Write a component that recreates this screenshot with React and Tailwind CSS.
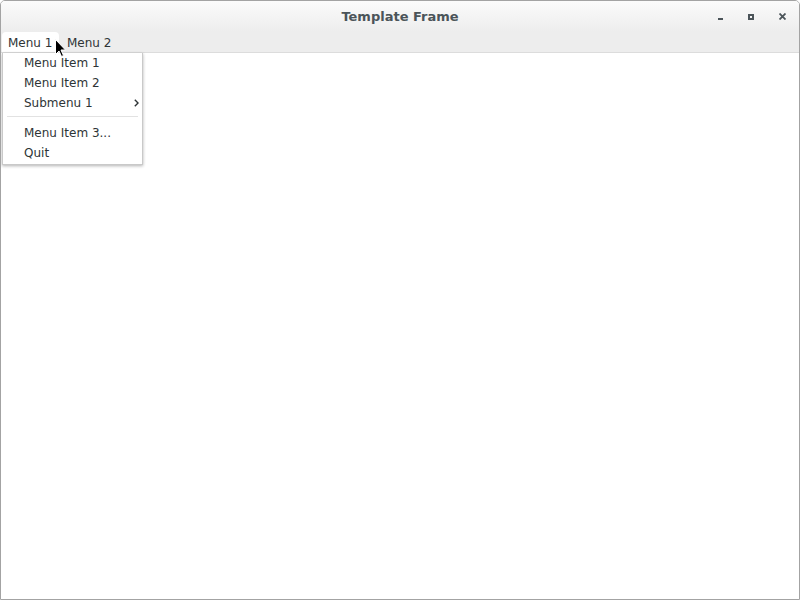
import React from 'react';

const font = { fontFamily: '"DejaVu Sans", "Liberation Sans", sans-serif' };

function Cursor() {
  return (
    <svg className="absolute left-[54px] top-[38px]" width="12" height="19" viewBox="0 0 12 19">
      <path d="M0.5 0.5 L0.5 15.5 L4 12 L6.5 17.5 L8.5 16.5 L6 11 L10.5 11 Z" fill="#000" stroke="#fff" strokeWidth="1" />
    </svg>
  );
}

export default function App() {
  return (
    <div className="w-[800px] h-[600px] bg-white" style={font}>
      <div className="relative w-full h-full flex flex-col border border-[#a3a3a3] rounded-t-[5px] overflow-hidden">
        {/* Title bar */}
        <div className="h-[31px] flex items-center justify-center relative bg-gradient-to-b from-[#fbfbfb] to-[#ededed]">
          <span className="text-[13px] font-bold text-[#4b5459] mt-[1px]">Template Frame</span>
          <div className="absolute right-[13px] top-[12px] flex items-center gap-[25px]">
            <span className="w-[5px] h-[2px] bg-[#4b5459] mt-[5px]" />
            <span className="w-[6px] h-[6px] border-2 border-[#4b5459]" />
            <svg width="7" height="7" viewBox="0 0 7 7">
              <path d="M0.5 0.5 L6.5 6.5 M6.5 0.5 L0.5 6.5" stroke="#4b5459" strokeWidth="1.8" />
            </svg>
          </div>
        </div>

        {/* Menu bar */}
        <div className="h-[21px] flex items-stretch bg-[#ededed] border-b border-[#dcdcdc] text-[12px] text-[#2e3436] pl-[1px] whitespace-nowrap">
          <div className="bg-white rounded-t-[4px] pl-[6px] pt-[1px] flex items-center w-[57px]">Menu 1</div>
          <div className="pl-[8px] pt-[1px] flex items-center">Menu 2</div>
        </div>

        <div className="flex-1 bg-white" />

        {/* Dropdown */}
        <div className="absolute left-[1px] top-[52px] w-[141px] bg-white border border-[#c9c9c9] border-t-0 shadow-[0_1px_3px_rgba(0,0,0,0.3)] text-[12px] text-[#2e3436] pb-[1px] whitespace-nowrap">
          <div className="h-[20px] pl-[21px] flex items-center">Menu Item 1</div>
          <div className="h-[20px] pl-[21px] flex items-center">Menu Item 2</div>
          <div className="h-[20px] pl-[21px] pr-[3px] flex items-center justify-between">
            <span>Submenu 1</span>
            <svg width="5" height="8" viewBox="0 0 5 8">
              <path d="M0.8 0.8 L4 4 L0.8 7.2" fill="none" stroke="#2e3436" strokeWidth="1.4" />
            </svg>
          </div>
          <div className="h-[10px] flex items-start pt-[3px] px-[4px]">
            <div className="h-px w-full bg-[#e2e2e2]" />
          </div>
          <div className="h-[20px] pl-[21px] flex items-center">Menu Item 3...</div>
          <div className="h-[20px] pl-[21px] flex items-center">Quit</div>
        </div>

        <Cursor />
      </div>
    </div>
  );
}
